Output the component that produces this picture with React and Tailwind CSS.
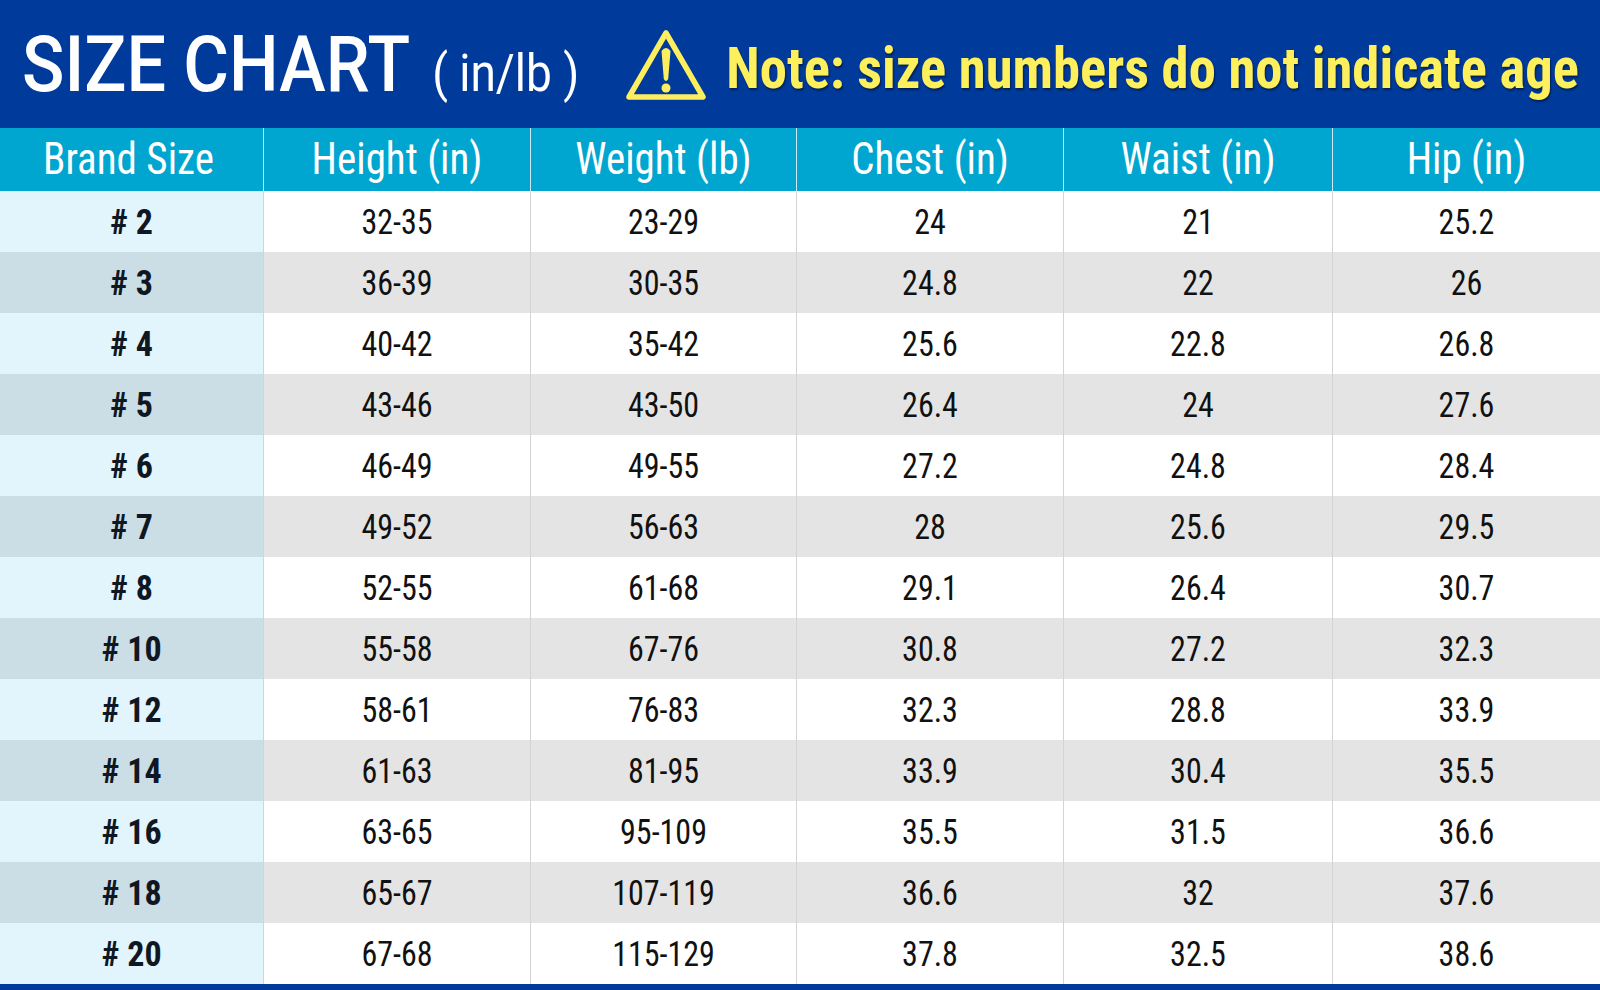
const columns = ['Brand Size', 'Height (in)', 'Weight (lb)', 'Chest (in)', 'Waist (in)', 'Hip (in)']

const rows = [
  ['# 2', '32-35', '23-29', '24', '21', '25.2'],
  ['# 3', '36-39', '30-35', '24.8', '22', '26'],
  ['# 4', '40-42', '35-42', '25.6', '22.8', '26.8'],
  ['# 5', '43-46', '43-50', '26.4', '24', '27.6'],
  ['# 6', '46-49', '49-55', '27.2', '24.8', '28.4'],
  ['# 7', '49-52', '56-63', '28', '25.6', '29.5'],
  ['# 8', '52-55', '61-68', '29.1', '26.4', '30.7'],
  ['# 10', '55-58', '67-76', '30.8', '27.2', '32.3'],
  ['# 12', '58-61', '76-83', '32.3', '28.8', '33.9'],
  ['# 14', '61-63', '81-95', '33.9', '30.4', '35.5'],
  ['# 16', '63-65', '95-109', '35.5', '31.5', '36.6'],
  ['# 18', '65-67', '107-119', '36.6', '32', '37.6'],
  ['# 20', '67-68', '115-129', '37.8', '32.5', '38.6']
]

// same widths in the header and in every row
const grid = 'grid grid-cols-[263px_267px_266px_267px_269px_1fr]'

const WarningIcon = () => (
  <svg width="82" height="74" viewBox="0 0 82 74" fill="none">
    <path d="M41 5 L78 69 L4 69 Z" stroke="#fdee5f" strokeWidth="5.5" strokeLinejoin="round" />
    <path d="M36.5 23 Q41 17 45.5 23 L43.2 51 Q41 55 38.8 51 Z" fill="#fdee5f" />
    <circle cx="41" cy="60" r="4.5" fill="#fdee5f" />
  </svg>
)

export default function App() {
  return (
    <div className="w-[1600px] h-[990px] bg-white flex flex-col overflow-hidden">
      <div className="h-[128px] shrink-0 bg-[#003a9b] flex items-center pl-[22px] whitespace-nowrap">
        <h1 className="shrink-0 font-['Roboto',sans-serif] font-medium text-white text-[70px] leading-none flex items-baseline scale-y-[1.12]">
          SIZE CHART
          <span className="text-[46px] font-normal ml-[22px]">( in/lb )</span>
        </h1>
        <div className="shrink-0 ml-[46px] mt-[1px]">
          <WarningIcon />
        </div>
        <p className="shrink-0 ml-[19px] mt-[8px] font-['Roboto_Condensed',sans-serif] font-bold text-[#fdf05c] text-[54.6px] leading-none scale-y-[1.06] [text-shadow:1px_2px_2px_rgba(0,0,0,0.45)]">
          Note: size numbers do not indicate age
        </p>
      </div>

      <div className={`${grid} h-[63px] shrink-0 bg-[#00a6cf] font-['Roboto_Condensed',sans-serif] text-white text-[41px]`}>
        {columns.map((c, i) => (
          <div
            key={c}
            className={`flex items-center justify-center leading-none whitespace-nowrap ${i > 0 ? 'border-l border-[#c9eaf4]' : 'pr-[6px]'}`}
          >
            <span className="scale-y-[1.1]">{c}</span>
          </div>
        ))}
      </div>

      <div className="flex flex-col shrink-0 font-['Roboto_Condensed',sans-serif] text-[32px] text-[#111]">
        {rows.map((r, ri) => (
          <div key={r[0]} className={`${grid} h-[61px] ${ri % 2 ? 'bg-[#e4e4e4]' : 'bg-white'}`}>
            {r.map((v, ci) => (
              <div
                key={ci}
                className={`flex items-center justify-center leading-none ${
                  ci === 0
                    ? `font-bold text-[34px] text-[#0f1722] ${ri % 2 ? 'bg-[#cbdee6]' : 'bg-[#e2f4fc]'}`
                    : 'border-l border-[#d4d4d4]'
                }`}
              >
                <span className={ci === 0 ? 'scale-y-[1.04]' : 'scale-y-[1.1]'}>{v}</span>
              </div>
            ))}
          </div>
        ))}
      </div>

      <div className="flex-1 bg-[#003a9b]" />
    </div>
  )
}
